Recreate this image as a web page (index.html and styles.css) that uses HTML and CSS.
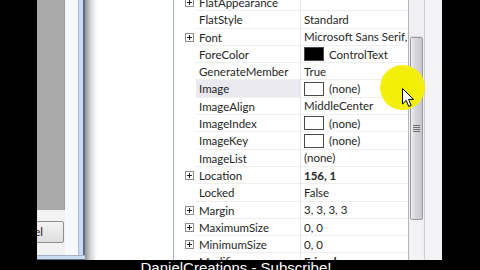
FILE: index.html
```html
<!DOCTYPE html>
<html>
<head>
<meta charset="utf-8">
<link rel="stylesheet" href="styles.css">
</head>
<body>
<div class="screen">
  <div class="top">
    <div class="black-l"></div>
    <div class="dialog">
      <div class="dlg-main">
        <div class="dlg-left">
          <div class="dlg-gray"></div>
          <div class="dlg-foot"><div class="btn">Cancel</div></div>
        </div>
        <div class="dlg-strip"></div>
        <div class="dlg-edge"></div>
      </div>
      <div class="dlg-bottom"></div>
    </div>
    <div class="shadow"></div>
    <div class="gap"></div>
    <div class="grid">
      <div class="rows">
        <div class="row"><span class="margin"><svg class="exp" viewBox="0 0 9 9"><rect x="0.5" y="0.5" width="8" height="8" fill="#fff" stroke="#8c8c8c"/><path d="M2 4.5h5M4.5 2v5" stroke="#222"/></svg></span><span class="name">FlatAppearance</span><span class="val"></span></div>
        <div class="row"><span class="margin"></span><span class="name">FlatStyle</span><span class="val">Standard</span></div>
        <div class="row"><span class="margin"><svg class="exp" viewBox="0 0 9 9"><rect x="0.5" y="0.5" width="8" height="8" fill="#fff" stroke="#8c8c8c"/><path d="M2 4.5h5M4.5 2v5" stroke="#222"/></svg></span><span class="name">Font</span><span class="val">Microsoft Sans Serif, 8.25pt</span></div>
        <div class="row"><span class="margin"></span><span class="name">ForeColor</span><span class="val"><span class="swatch black"></span>ControlText</span></div>
        <div class="row"><span class="margin"></span><span class="name">GenerateMember</span><span class="val">True</span></div>
        <div class="row hover"><span class="margin"></span><span class="name">Image</span><span class="val"><span class="swatch"></span>(none)</span></div>
        <div class="row"><span class="margin"></span><span class="name">ImageAlign</span><span class="val">MiddleCenter</span></div>
        <div class="row"><span class="margin"></span><span class="name">ImageIndex</span><span class="val"><span class="swatch"></span>(none)</span></div>
        <div class="row"><span class="margin"></span><span class="name">ImageKey</span><span class="val"><span class="swatch"></span>(none)</span></div>
        <div class="row"><span class="margin"></span><span class="name">ImageList</span><span class="val">(none)</span></div>
        <div class="row"><span class="margin"><svg class="exp" viewBox="0 0 9 9"><rect x="0.5" y="0.5" width="8" height="8" fill="#fff" stroke="#8c8c8c"/><path d="M2 4.5h5M4.5 2v5" stroke="#222"/></svg></span><span class="name">Location</span><span class="val bold">156, 1</span></div>
        <div class="row"><span class="margin"></span><span class="name">Locked</span><span class="val">False</span></div>
        <div class="row"><span class="margin"><svg class="exp" viewBox="0 0 9 9"><rect x="0.5" y="0.5" width="8" height="8" fill="#fff" stroke="#8c8c8c"/><path d="M2 4.5h5M4.5 2v5" stroke="#222"/></svg></span><span class="name">Margin</span><span class="val">3, 3, 3, 3</span></div>
        <div class="row"><span class="margin"><svg class="exp" viewBox="0 0 9 9"><rect x="0.5" y="0.5" width="8" height="8" fill="#fff" stroke="#8c8c8c"/><path d="M2 4.5h5M4.5 2v5" stroke="#222"/></svg></span><span class="name">MaximumSize</span><span class="val">0, 0</span></div>
        <div class="row"><span class="margin"><svg class="exp" viewBox="0 0 9 9"><rect x="0.5" y="0.5" width="8" height="8" fill="#fff" stroke="#8c8c8c"/><path d="M2 4.5h5M4.5 2v5" stroke="#222"/></svg></span><span class="name">MinimumSize</span><span class="val">0, 0</span></div>
        <div class="row"><span class="margin"></span><span class="name">Modifiers</span><span class="val bold">Friend</span></div>
      </div>
    </div>
    <div class="scroll">
      <div class="track-top"></div>
      <div class="thumb"><span class="grip"></span></div>
      <div class="track-bot"></div>
    </div>
    <div class="side"></div>
    <div class="black-r"></div>
  </div>
  <div class="caption">DanielCreations - Subscribe!</div>
  <div class="spot"></div>
  <svg class="cursor" width="13" height="20" viewBox="0 0 13 20"><path d="M0.5 0.5 L0.5 16 L4.2 12.4 L6.8 18.5 L9.2 17.5 L6.6 11.4 L11.5 11.4 Z" fill="#fff" stroke="#000" stroke-width="1" stroke-linejoin="round"/></svg>
</div>
</body>
</html>
```

FILE: styles.css
```css
* { box-sizing: border-box; }
html, body { margin: 0; padding: 0; background: #000; }
.screen {
  position: relative;
  width: 480px;
  height: 270px;
  overflow: hidden;
  background: #000;
  display: flex;
  flex-direction: column;
}
.top { display: flex; height: 260px; flex: none; }
.black-l { width: 37px; background: #000; }
.dialog { width: 48px; display: flex; flex-direction: column; }
.dlg-main { flex: 1; display: flex; }
.dlg-left { width: 28px; display: flex; flex-direction: column; overflow: hidden; }
.dlg-gray { height: 210px; background: #aaaaaa; border-right: 1px solid #9c9c9c; }
.dlg-foot { flex: 1; background: #f1f2f4; padding-top: 11px; }
.btn {
  margin-left: -49px;
  width: 76px;
  height: 22px;
  border: 1px solid #8e8e8e;
  border-radius: 2px;
  background: linear-gradient(#f4f4f4, #dedede);
  font: 11.5px/20px Lato, "Liberation Sans", sans-serif;
  color: #222;
  text-align: center;
}
.dlg-strip { width: 14px; background: #f7f8fa; border-right: 1px solid #a9bfd7; }
.dlg-edge { width: 6px; background: #c9dbf0; border-right: 2px solid #5e6e80; }
.dlg-bottom { height: 5px; background: #c9dbf0; border-top: 1px solid #a8b2bf; border-bottom: 1px solid #5e6e80; }
.shadow { width: 12px; background: linear-gradient(to right, #8f949a, #d6d8da 50%, #ffffff); }
.gap { width: 76px; background: #fff; }
.grid {
  width: 235px;
  background: #fff;
  border-left: 1px solid #a3b5ca;
  overflow: hidden;
}
.rows { margin-top: -6px; }
.row {
  display: flex;
  height: 17.3px;
  font: 11.5px/17px Lato, "Segoe UI", sans-serif;
  color: #262626;
  white-space: nowrap;
}
.margin { width: 22px; flex: none; display: flex; align-items: center; padding-left: 11px; }
.exp { width: 9px; height: 9px; display: block; }
.name { width: 104px; flex: none; padding-left: 3px; border-bottom: 1px solid #efefef; }
.val {
  flex: 1;
  padding-left: 3px;
  border-left: 1px solid #e6e6e6;
  border-bottom: 1px solid #efefef;
  overflow: hidden;
  display: flex;
  align-items: center;
}
.bold { font-weight: bold; }
.hover .name { background: #e9e9ef; }
.swatch {
  width: 20px;
  height: 14px;
  border: 1px solid #4a4a4a;
  background: #fff;
  margin-right: 5px;
  flex: none;
}
.swatch.black { background: #000; }
.scroll {
  width: 16px;
  border-left: 1px solid #b5b5b5;
  background: #f0f0f2;
  display: flex;
  flex-direction: column;
  padding: 0 1px;
}
.track-top { height: 37px; border-bottom: 1px solid #dcdcdc; }
.thumb {
  height: 183px;
  border: 1px solid #9a9aa0;
  border-radius: 2px;
  background: linear-gradient(to right, #eeeef0, #d4d4da 45%, #c6c6cc);
  display: flex;
  align-items: center;
  justify-content: center;
}
.grip {
  width: 7px;
  height: 7px;
  background: repeating-linear-gradient(#6d6d72 0 1px, transparent 1px 2px);
}
.track-bot { flex: 1; background: #f3f3f5; }
.side { width: 18px; background: #f4f4f7; border-left: 1px solid #d0d0d4; }
.black-r { width: 38px; background: #000; }
.caption {
  height: 10px;
  padding-right: 8px;
  text-align: center;
  color: #fff;
  font: 15px/15px "Liberation Sans", Arial, sans-serif;
  white-space: nowrap;
}
.spot {
  position: absolute;
  left: 380px;
  top: 65px;
  width: 45px;
  height: 45px;
  border-radius: 50%;
  background: radial-gradient(circle, #f2ee00 0, #f4ef10 80%, rgba(244, 239, 16, 0) 100%);
}
.cursor { position: absolute; left: 402px; top: 88px; }
```
